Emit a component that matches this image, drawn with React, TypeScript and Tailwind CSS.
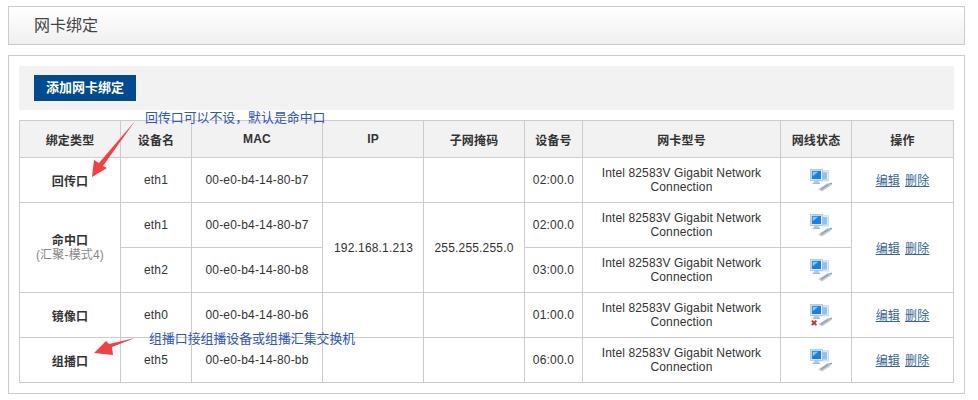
import React from 'react';

const FONT = "font-['Liberation_Sans','Noto_Sans_CJK_SC',sans-serif]";

type Row = {
  type?: React.ReactNode;
  typeSpan?: number;
  dev: string;
  mac: string;
  ip?: string;
  mask?: string;
  netSpan?: number;
  hideNet?: boolean;
  slot: string;
  down?: boolean;
  opSpan?: number;
  hideOp?: boolean;
};

const rows: Row[] = [
  { type: '回传口', dev: 'eth1', mac: '00-e0-b4-14-80-b7', slot: '02:00.0' },
  {
    type: (
      <>
        <div>命中口</div>
        <div className="font-normal text-[#888]">(汇聚-模式4)</div>
      </>
    ),
    typeSpan: 2,
    dev: 'eth1',
    mac: '00-e0-b4-14-80-b7',
    ip: '192.168.1.213',
    mask: '255.255.255.0',
    netSpan: 2,
    slot: '02:00.0',
    opSpan: 2,
  },
  { dev: 'eth2', mac: '00-e0-b4-14-80-b8', hideNet: true, slot: '03:00.0', hideOp: true },
  { type: '镜像口', dev: 'eth0', mac: '00-e0-b4-14-80-b6', slot: '01:00.0', down: true },
  { type: '组播口', dev: 'eth5', mac: '00-e0-b4-14-80-bb', slot: '06:00.0' },
];

const headers = ['绑定类型', '设备名', 'MAC', 'IP', '子网掩码', '设备号', '网卡型号', '网线状态', '操作'];

const NetIcon = ({ down }: { down?: boolean }) => (
  <svg width="24" height="24" viewBox="0 0 26 26" className="mx-auto block">
    {/* back monitor */}
    <rect x="8" y="3" width="13" height="11" fill="#e3edf7" stroke="#bcd0e4" strokeWidth="0.8" />
    <rect x="13" y="4.5" width="6.5" height="8" fill="#8cc2f0" />
    {/* front monitor */}
    <rect x="1.5" y="1.5" width="13" height="12" fill="#e8f0f8" stroke="#a3bfd9" strokeWidth="0.8" />
    <rect x="3" y="3" width="10" height="9" fill="#1a7fe8" />
    <path d="M4 4 L10 4 L4 9 Z" fill="#8ecaf6" />
    <path d="M6 13.5 L10 13.5 L11 16 L5 16 Z" fill="#b4c8dc" />
    <path d="M4 16 L12 16 L12 17 L4 17 Z" fill="#6f9fd0" />
    {/* cable plug */}
    <path d="M10 23 L20 16.5 L25 16 L23 19.5 L14 25.5 Z" fill="#c2cad2" />
    <path d="M13 23 L21 17.8" stroke="#8c98a3" strokeWidth="1.2" fill="none" />
    <path d="M22 16.5 L25 16 L24 18.5 Z" fill="#5aa5dd" />
    {down && <path d="M3 19 L8 24 M8 19 L3 24" stroke="#e0202a" strokeWidth="2" fill="none" />}
  </svg>
);

const cell = 'border border-[#ccc] text-center align-middle p-0';

export default function App() {
  return (
    <div className={`${FONT} px-2 pt-[6px] pr-[13px] text-xs text-[#333] bg-white h-[400px] overflow-hidden`}>
      <div className="h-[39px] border border-[#ccc] bg-gradient-to-b from-white to-[#f0f0f0] pl-[25px] flex items-center text-base text-[#444]">
        网卡绑定
      </div>

      <div className="mt-[10px] h-[339px] border border-[#ccc] pt-[10px] px-[10px] relative">
        <div className="h-[44px] bg-[#f2f2f2] pl-[15px] pt-[9px]">
          <button className="h-[26px] w-[102px] bg-[#004a8f] text-white font-bold text-[13px]">添加网卡绑定</button>
        </div>

        <table className="mt-[10px] w-[934px] table-fixed border-collapse leading-[14px] tracking-[0.18px]">
          <colgroup>
            <col className="w-[101px]" />
            <col className="w-[71px]" />
            <col className="w-[131px]" />
            <col className="w-[101px]" />
            <col className="w-[101px]" />
            <col className="w-[58px]" />
            <col className="w-[198px]" />
            <col className="w-[71px]" />
            <col className="w-[102px]" />
          </colgroup>
          <thead>
            <tr className="h-[37px] bg-[#f2f2f2]">
              {headers.map((h) => (
                <th key={h} className={`${cell} font-bold ${h === 'MAC' || h === 'IP' ? '' : 'pt-[4px]'}`}>
                  {h}
                </th>
              ))}
            </tr>
          </thead>
          <tbody>
            {rows.map((r, i) => (
              <tr key={i} className="h-[45px]">
                {r.type !== undefined && (
                  <td rowSpan={r.typeSpan} className={`${cell} font-bold ${r.typeSpan ? '' : 'pt-[4px]'}`}>
                    {r.type}
                  </td>
                )}
                <td className={cell}>{r.dev}</td>
                <td className={cell}>{r.mac}</td>
                {!r.hideNet && (
                  <>
                    <td rowSpan={r.netSpan} className={`${cell} pl-[1px]`}>
                      {r.ip}
                    </td>
                    <td rowSpan={r.netSpan} className={cell}>
                      {r.mask}
                    </td>
                  </>
                )}
                <td className={cell}>{r.slot}</td>
                <td className={`${cell} tracking-[0.12px]`}>
                  Intel 82583V Gigabit Network
                  <br />
                  Connection
                </td>
                <td className={`${cell} pl-[9px]`}>
                  <NetIcon down={r.down} />
                </td>
                {!r.hideOp && (
                  <td rowSpan={r.opSpan} className={`${cell} pt-[2px]`}>
                    <a className="text-[#369] underline mr-[5px]">编辑</a>
                    <a className="text-[#369] underline">删除</a>
                  </td>
                )}
              </tr>
            ))}
          </tbody>
        </table>

        {/* annotations drawn over the table */}
        <svg width="150" height="290" className="absolute left-[10px] top-[55px] pointer-events-none">
          <g transform="translate(-19 -111)">
            <polygon points="135,121 103,166 107,168 92,177 94,160 99,163" fill="#f44040" />
            <polygon points="135,338 112,347 113,355 94,353 106,341 109,344" fill="#f44040" />
          </g>
        </svg>
        <span className="absolute left-[136px] top-[54px] text-[12.9px] leading-[16px] text-[#2f55c8] whitespace-nowrap">
          回传口可以不设，默认是命中口
        </span>
        <span className="absolute left-[140px] top-[275px] text-[12.9px] leading-[16px] text-[#2f55c8] whitespace-nowrap">
          组播口接组播设备或组播汇集交换机
        </span>
      </div>
    </div>
  );
}
